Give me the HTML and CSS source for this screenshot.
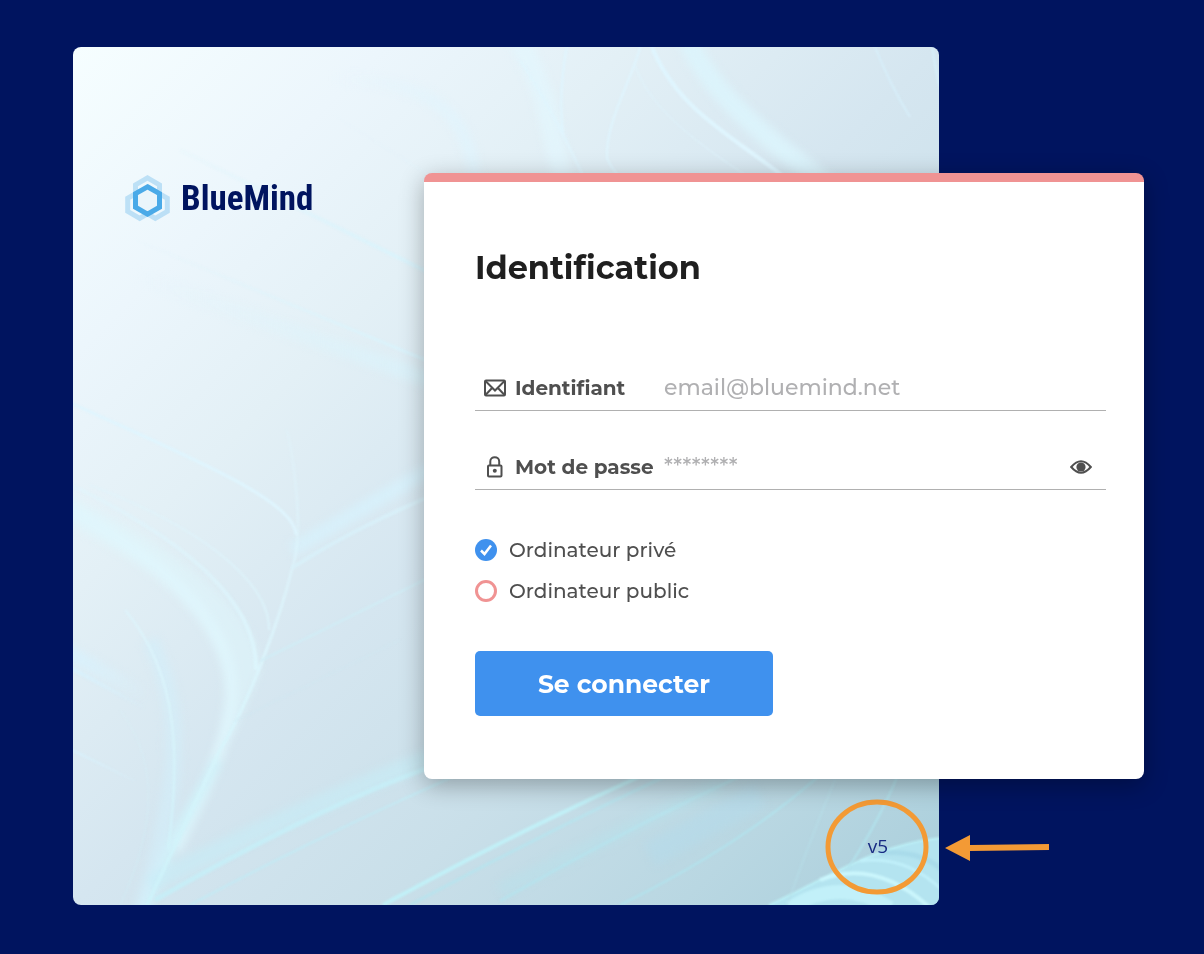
FILE: index.html
```html
<!DOCTYPE html>
<html lang="fr">
<head>
    <meta charset="UTF-8">
    <meta name="viewport" content="width=device-width, initial-scale=1.0">

    <title>BlueMind - Identification</title>
    <link rel="stylesheet" href="styles.css">
</head>
<body>

    <main class="page">
        <section class="panel">
            <svg class="artwork" viewBox="73 47 866 858" preserveAspectRatio="none" aria-hidden="true">
                <defs>
                    <linearGradient id="base" x1="0" y1="0" x2="1" y2="1">
                        <stop offset="0" stop-color="#f6feff"/>
                        <stop offset="0.18" stop-color="#ecf6fc"/>
                        <stop offset="0.32" stop-color="#e3f0f6"/>
                        <stop offset="0.5" stop-color="#d5e6f0"/>
                        <stop offset="0.68" stop-color="#c9dfe9"/>
                        <stop offset="0.85" stop-color="#b9d7e2"/>
                        <stop offset="1" stop-color="#a9cedb"/>
                    </linearGradient>
                    <linearGradient id="vein" gradientUnits="userSpaceOnUse" x1="0" y1="430" x2="0" y2="905">
                        <stop offset="0" stop-color="#e0f5fd" stop-opacity="0.3"/>
                        <stop offset="0.5" stop-color="#dcf5fc"/>
                        <stop offset="1" stop-color="#cdf2f9"/>
                    </linearGradient>
                    <linearGradient id="ray" gradientUnits="userSpaceOnUse" x1="130" y1="0" x2="440" y2="0">
                        <stop offset="0" stop-color="#e0f6fd" stop-opacity="0"/>
                        <stop offset="1" stop-color="#d8f3fc"/>
                    </linearGradient>
                    <linearGradient id="fade" gradientUnits="userSpaceOnUse" x1="70" y1="0" x2="150" y2="0">
                        <stop offset="0" stop-color="#d8f1fc"/>
                        <stop offset="1" stop-color="#d8f1fc" stop-opacity="0"/>
                    </linearGradient>
                    <linearGradient id="arc" gradientUnits="userSpaceOnUse" x1="330" y1="0" x2="470" y2="0">
                        <stop offset="0" stop-color="#e4f6ff" stop-opacity="0"/>
                        <stop offset="1" stop-color="#e0f4fd"/>
                    </linearGradient>
                    <filter id="soft" filterUnits="userSpaceOnUse" x="40" y="20" width="930" height="910" color-interpolation-filters="sRGB"><feGaussianBlur stdDeviation="4"/></filter>
                    <filter id="fine" filterUnits="userSpaceOnUse" x="40" y="20" width="930" height="910" color-interpolation-filters="sRGB"><feGaussianBlur stdDeviation="1"/></filter>
                </defs>
                <rect x="73" y="47" width="866" height="858" fill="url(#base)"/>

                <!-- wide soft bands -->
                <g filter="url(#soft)">
                    <path d="M50 486C175 545 262 610 260 672L236 730C180 810 170 860 150 915L135 915C160 840 222 770 228 700C222 620 160 570 50 515Z" fill="#def5fc" opacity="0.55"/>
                    <path d="M50 500C160 555 230 620 231 690C231 740 200 800 175 850" fill="none" stroke="#e0f6fd" stroke-width="12" opacity="0.8"/>
                    <path d="M218 760C185 820 160 860 144 915" fill="none" stroke="#cef3fa" stroke-width="10" opacity="0.8"/>
                    <path d="M150 640C190 720 175 800 140 915" fill="none" stroke="#d2effa" stroke-width="16" opacity="0.6"/>
                    <path d="M60 648L148 696" stroke="url(#fade)" stroke-width="14"/>
                    <path d="M292 550L460 452" stroke="#d8f1fc" stroke-width="14" opacity="0.85"/>
                    <path d="M135 275Q290 330 480 398" fill="none" stroke="url(#ray)" stroke-width="16" opacity="0.7"/>
                    <path d="M150 885Q270 820 480 738" fill="none" stroke="#c7edf6" stroke-width="18" opacity="0.6"/>
                    <path d="M320 78C430 80 468 105 477 190" fill="none" stroke="url(#arc)" stroke-width="12" opacity="0.8"/>
                    <path d="M512 30C545 80 550 120 565 195" fill="none" stroke="#e2f6fe" stroke-width="20" opacity="0.7"/>
                    <path d="M683 30C710 95 760 132 840 195" fill="none" stroke="#dcf4fc" stroke-width="20" opacity="0.9"/>
                    <path d="M650 855L760 795" stroke="#b2dcee" stroke-width="25" opacity="0.4"/>
                    <path d="M500 890L720 785" stroke="#b8e2eb" stroke-width="14" opacity="0.5"/>
                </g>

                <!-- leaf in the bottom corner -->
                <path d="M769 905C825 880 870 846 940 838V905Z" fill="#b4e4f0"/>
                <g fill="none" filter="url(#fine)">
                    <path d="M769 905C825 880 870 846 940 838" stroke="#bdf0f6" stroke-width="2"/>
                    <path d="M790 908Q840 876 890 908" stroke="#c7f5fc" stroke-width="14" opacity="0.7"/>
                    <path d="M820 880Q875 858 929 907" stroke="#cbf6fc" stroke-width="4"/>
                    <path d="M860 861Q905 855 942 890" stroke="#c1f0fa" stroke-width="3"/>
                    <path d="M880 853Q920 850 942 870" stroke="#a9dbea" stroke-width="5"/>
                </g>

                <!-- thin veins -->
                <g fill="none" stroke="url(#vein)" filter="url(#fine)">
                    <path d="M287 430C296 470 303 535 293 565C280 620 250 700 220 750L147 905" stroke-width="3"/>
                    <path d="M60 480C180 535 258 600 256 670" stroke-width="4"/>
                    <path d="M90 485C220 535 270 590 269 630" stroke-width="2"/>
                    <path d="M125 610C180 675 180 760 168 850" stroke-width="2"/>
                    <path d="M120 710C165 770 150 840 120 905" stroke-width="1" opacity="0.5"/>
                </g>
                <g fill="none" stroke="#dff5fe" filter="url(#fine)">
                    <path d="M60 398C190 458 296 500 296 535" stroke-width="3"/>
                    <path d="M60 662L145 708" stroke="url(#fade)" stroke-width="4"/>
                    <path d="M60 744L135 781" stroke="url(#fade)" stroke-width="2"/>
                    <path d="M135 240Q285 302 440 366" stroke="url(#ray)" stroke-width="3"/>
                    <path d="M180 150L440 278" stroke="url(#ray)" stroke-width="4"/>
                    <path d="M325 110L440 182" stroke="url(#arc)" stroke-width="2" opacity="0.5"/>
                    <path d="M292 568Q350 530 440 492" stroke="#d8f1fa" stroke-width="4" opacity="0.8"/>
                    <path d="M260 661L440 572" stroke="#d0edf6" stroke-width="2"/>
                    <path d="M235 721L400 640" stroke="#d0e8f2" stroke-width="1"/>
                    <path d="M155 900Q330 800 450 760" stroke="#c7edf6" stroke-width="5"/>
                    <path d="M190 905Q330 830 480 765" stroke="#c3eaf4" stroke-width="2"/>
                    <path d="M383 905Q510 835 645 774" stroke="#c1f0f7" stroke-width="4"/>
                    <path d="M410 905Q540 835 670 774" stroke="#b9e3ed" stroke-width="3"/>
                    <path d="M500 901Q615 835 740 776" stroke="#b7e2ec" stroke-width="3"/>
                    <path d="M620 905Q740 846 820 775" stroke="#b2e3ed" stroke-width="2"/>
                    <path d="M787 905Q810 840 835 780" stroke="#b7e0e9" stroke-width="2" opacity="0.6"/>
                    <path d="M847 870Q880 820 900 770" stroke="#b2e3ed" stroke-width="2"/>
                    <path d="M642 40C635 75 605 120 607 158Q610 166 620 178" stroke-width="2"/>
                    <path d="M567 45Q558 95 563 135" stroke-width="2"/>
                    <path d="M650 42C675 110 735 137 785 178" stroke-width="4"/>
                    <path d="M635 65C650 110 700 145 750 178" stroke-width="1"/>
                    <path d="M520 60Q550 105 584 178" stroke-width="3" opacity="0.7"/>
                    <path d="M872 40Q890 85 910 117" stroke="#d7effa" stroke-width="2"/>
                    <path d="M932 45Q936 75 942 95" stroke="#d7effa" stroke-width="2"/>
                </g>
            </svg>

            <div class="logo">
                <svg class="logo-mark" viewBox="0 0 46 48" aria-hidden="true">
                    <g fill="none" stroke="#4aaae8" stroke-width="5">
                        <path d="M22.500 2.900L34.500 9.900V23.100L22.500 30.100L10.500 23.100V9.900Z" opacity="0.3"/>
                        <path d="M14.700 16.300L26.700 23.300V36.400L14.700 43.300L2.700 36.400V23.300Z" opacity="0.3"/>
                        <path d="M30.300 16.300L42.300 23.300V36.400L30.300 43.300L18.300 36.400V23.300Z" opacity="0.3"/>
                    </g>
                    <path d="M22.500 11.800L34.500 18.600V32.200L22.500 39.200L10.500 32.200V18.600Z" fill="#eaf5fb" stroke="#4aaae8" stroke-width="5"/>
                </svg>
                <span class="logo-name">BlueMind</span>
            </div>

            <span class="version">v5</span>

            <svg class="callout" viewBox="825 797 226 100" aria-hidden="true">
                <ellipse cx="877" cy="847" rx="49" ry="45" fill="none" stroke="#f39a35" stroke-width="5"/>
                <path d="M945 848L970 835V845L1049 844V850L970 851V861Z" fill="#f39a35"/>
            </svg>
        </section>

        <section class="card">
            <h1>Identification</h1>

            <form>
                <div class="field">
                    <label for="login">
                        <svg class="icon" viewBox="0 0 24 24" fill="none" stroke="#4f4f4f" stroke-width="2" aria-hidden="true">
                            <rect x="2" y="4.500" width="20" height="15" rx="1"/>
                            <path d="M2.500 5L12 14.500L21.500 5M2.500 19L9.500 11.500M21.500 19L14.500 11.500"/>
                        </svg>
                        Identifiant
                    </label>
                    <input type="text" id="login" placeholder="email@bluemind.net">
                </div>

                <div class="field">
                    <label for="password">
                        <svg class="icon" viewBox="0 0 24 24" fill="none" stroke="#4f4f4f" stroke-width="2" aria-hidden="true">
                            <rect x="5" y="10.500" width="13.500" height="11" rx="1"/>
                            <path d="M7.300 10V6.500C7.300 0.800 16.200 0.800 16.200 6.500V10"/>
                            <circle cx="11.800" cy="15.800" r="2" fill="#4f4f4f" stroke="none"/>
                        </svg>
                        Mot de passe
                    </label>
                    <input type="password" id="password" placeholder="********">
                    <button type="button" class="show-password" aria-label="Afficher le mot de passe">
                        <svg viewBox="0 0 22 14" aria-hidden="true">
                            <path d="M1.200 7Q11 -4.400 20.800 7Q11 18.400 1.200 7Z" fill="#fff" stroke="#4f4f4f" stroke-width="2"/>
                            <circle cx="11" cy="7" r="4.600" fill="#4f4f4f"/>
                        </svg>
                    </button>
                </div>

                <div class="choices">
                    <label for="private"><input type="radio" id="private" name="computer" checked>Ordinateur privé</label>
                    <label for="public"><input type="radio" id="public" name="computer">Ordinateur public</label>
                </div>

                <button type="submit" class="submit">Se connecter</button>
            </form>
        </section>
    </main>

</body>
</html>
```
FILE: styles.css
```css
* {
    box-sizing: border-box;
}

body {
    margin: 0;
    background-color: #00145f;
    font-family: Montserrat, Inter, sans-serif;
    font-variant-ligatures: none;
    color: #4f4f4f;
}

.page {
    display: grid;
    grid-template-columns: 351px 1fr 205px;
    grid-template-rows: 126px auto 126px;
    padding: 47px 60px 49px 73px;
}

.panel {
    grid-column: 1 / 3;
    grid-row: 1 / 4;
    position: relative;
    display: flex;
    flex-direction: column;
    justify-content: space-between;
    padding: 128px 51px 47px 52px;
}

.artwork {
    position: absolute;
    top: 0;
    left: 0;
    width: 100%;
    height: 100%;
    border-radius: 8px;
    overflow: hidden;
}

.logo {
    position: relative;
    display: flex;
    align-items: center;
    gap: 10px;
}

.logo-mark {
    width: 46px;
    height: 48px;
}

.logo-name {
    font-family: "Roboto Condensed", Roboto, sans-serif;
    font-size: 35px;
    font-weight: bold;
    line-height: 48px;
    color: #00145f;
}

.version {
    position: relative;
    align-self: flex-end;
    font-family: "Open Sans", sans-serif;
    font-size: 19px;
    line-height: 24px;
    color: #162a82;
}

.callout {
    position: absolute;
    right: -112px;
    bottom: 8px;
    width: 226px;
    height: 100px;
}

.card {
    grid-column: 2 / 4;
    grid-row: 2;
    z-index: 1;
    padding: 62px 38px 63px 51px;
    background-color: #fff;
    border-top: 9px solid #f09393;
    border-radius: 8px;
    box-shadow: 0 6px 24px rgba(0, 0, 0, 0.3);
}

h1 {
    margin: 0 0 75px;
    font-size: 32px;
    line-height: 48px;
    color: #1f1f1f;
}

.field {
    display: flex;
    align-items: center;
    height: 44px;
    margin-bottom: 35px;
    padding-bottom: 2px;
    border-bottom: 1px solid #b0b0b0;
}

.field label {
    display: flex;
    align-items: center;
    gap: 8px;
    width: 189px;
    padding-left: 8px;
    font-size: 20px;
    font-weight: 700;
    white-space: nowrap;
}

.icon {
    width: 24px;
    height: 24px;
}

.field input {
    flex: 1;
    min-width: 0;
    padding: 0;
    border: none;
    outline: none;
    background: none;
    font-family: inherit;
    font-size: 22px;
    font-weight: 500;
    color: #4f4f4f;
}

.field input::placeholder {
    color: #b0b0b2;
}

.show-password {
    display: flex;
    margin-right: 14px;
    padding: 0;
    border: none;
    background: none;
    cursor: pointer;
}

.show-password svg {
    width: 22px;
    height: 14px;
}

.choices {
    display: flex;
    flex-direction: column;
    gap: 13px;
    margin: 46px 0;
}

.choices label {
    display: flex;
    align-items: center;
    gap: 12px;
    font-size: 20px;
    font-weight: 500;
    line-height: 28px;
}

.choices input {
    appearance: none;
    width: 22px;
    height: 22px;
    margin: 0;
    border: 3px solid #f09393;
    border-radius: 50%;
}

.choices input:checked {
    border: none;
    background: #3f91ee url("data:image/svg+xml,%3Csvg xmlns='http://www.w3.org/2000/svg' viewBox='0 0 22 22'%3E%3Cpath d='M6 11.500L9.500 15L16 6.500' fill='none' stroke='white' stroke-width='2.500'/%3E%3C/svg%3E");
}

.submit {
    width: 298px;
    height: 65px;
    border: none;
    border-radius: 5px;
    background-color: #3f91ee;
    font-family: inherit;
    font-size: 25px;
    font-weight: 700;
    color: #fff;
    cursor: pointer;
}
```
